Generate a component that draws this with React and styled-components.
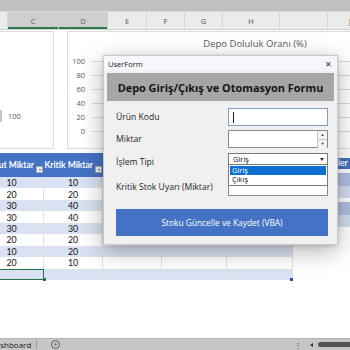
import React from "react";
import styled, { createGlobalStyle } from "styled-components";

const GlobalStyle = createGlobalStyle`
  html, body { margin: 0; padding: 0; background: #fff; }
  body { font-family: "Open Sans", "Liberation Sans", sans-serif; }
`;

const columns = [
  { label: "", w: 7 },
  { label: "C", w: 50, active: true },
  { label: "D", w: 48, active: true },
  { label: "E", w: 38 },
  { label: "F", w: 37 },
  { label: "G", w: 37 },
  { label: "H", w: 56 },
  { label: "", w: 47 },
  { label: "J", w: 44 },
];

const rows = [
  [10, 10], [20, 20], [30, 40], [30, 40], [30, 30], [20, 20], [10, 20], [20, 10],
];

const axis = [100, 80, 60, 40, 20, 0];

export default function App() {
  return (
    <Window>
      <GlobalStyle />
      <TopStrip />
      <ColumnHeaders>
        {columns.map((c, i) => (
          <ColHead key={i} w={c.w} active={c.active}>{c.label}</ColHead>
        ))}
      </ColumnHeaders>

      <Sheet>
        <ChartRow>
          <SmallChart>
            <BarStub />
            <SmallLabel>100</SmallLabel>
          </SmallChart>
          <BigChart>
            <ChartTitle>Depo Doluluk Oranı (%)</ChartTitle>
            <Plot>
              <Axis>
                {axis.map((a) => <AxisTick key={a}>{a}</AxisTick>)}
              </Axis>
              <Grid>
                {axis.map((a) => <GridLine key={a} />)}
              </Grid>
            </Plot>
          </BigChart>
        </ChartRow>

        <TableArea>
          <Table>
            <HeadRow>
              <HeadCell w={64}><HeadText>Mevcut Miktar</HeadText><Filter /></HeadCell>
              <HeadCell w={59}><HeadText>Kritik Miktar</HeadText><Filter /></HeadCell>
              <HeadCell w={59} />
              <HeadCell w={65} />
              <HeadCell w={66} />
            </HeadRow>
            {rows.map((r, i) => (
              <BodyRow key={i} band={i % 2 === 0}>
                <Cell w={64}>{r[0]}</Cell>
                <Cell w={59}>{r[1]}</Cell>
                <Cell w={59} />
                <Cell w={65} />
                <Cell w={66} />
              </BodyRow>
            ))}
            <BodyRow band>
              <Cell w={64} selected />
              <Cell w={59} />
              <Cell w={59} />
              <Cell w={65} />
              <Cell w={66} last />
            </BodyRow>
          </Table>

          <TableTail>
            <TailHead>İşlemler</TailHead>
            {[0, 1, 2, 3].map((i) => <TailRow key={i} band={i % 2 === 0} />)}
          </TableTail>
        </TableArea>
      </Sheet>

      <TabBar>
        <SheetTab>Dashboard</SheetTab>
        <TabDivider />
        <AddSheet>+</AddSheet>
        <TabSpacer />
        <TabDots>⋮</TabDots>
        <ScrollArrow />
        <ScrollThumb />
      </TabBar>

      <Dialog>
        <TitleBar>
          <span>UserForm</span>
          <CloseX>✕</CloseX>
        </TitleBar>
        <DialogBody>
          <Heading>Depo Giriş/Çıkış ve Otomasyon Formu</Heading>
          <FieldRow h={18} mt={7}>
            <Label>Ürün Kodu</Label>
            <TextBox h={18} focused><Caret /></TextBox>
          </FieldRow>
          <FieldRow h={18} mt={4}>
            <Label>Miktar</Label>
            <TextBox h={18}>
              <Spin>
                <SpinBtn>▲</SpinBtn>
                <SpinBtn>▼</SpinBtn>
              </Spin>
            </TextBox>
          </FieldRow>
          <FieldRow h={18} mt={5}>
            <Label>İşlem Tipi</Label>
            <Combo>
              <ComboText>Giriş</ComboText>
              <ComboArrow />
              <DropList>
                <DropItem active>Giriş</DropItem>
                <DropItem>Çıkış</DropItem>
              </DropList>
            </Combo>
          </FieldRow>
          <FieldRow h={19} mt={6}>
            <Label>Kritik Stok Uyarı (Miktar)</Label>
            <TextBox h={19} />
          </FieldRow>
          <SaveButton>Stoku Güncelle ve Kaydet (VBA)</SaveButton>
        </DialogBody>
      </Dialog>
    </Window>
  );
}

const Window = styled.div`
  width: 350px;
  height: 350px;
  overflow: hidden;
  position: relative;
  display: flex;
  flex-direction: column;
  background: #fff;
`
const TopStrip = styled.div`
  height: 11px;
  flex-shrink: 0;
  background: #c1c1c1;
  border-bottom: 1px solid #d9d9d9;
`
const ColumnHeaders = styled.div`
  display: flex;
  height: 17px;
  flex-shrink: 0;
  background: #ebebeb;
  border-bottom: 1px solid #d0d0d0;
`
const ColHead = styled.div`
  width: ${p => p.w}px;
  flex-shrink: 0;
  display: flex;
  align-items: center;
  justify-content: center;
  font-size: 7.5px;
  color: ${p => p.active ? '#3d6e4f' : '#505050'};
  background: ${p => p.active ? '#cfcfcf' : 'transparent'};
  border-right: 1px solid ${p => p.active ? '#cfcfcf' : '#d6d6d6'};
  box-shadow: ${p => p.active ? 'inset 0 -2px 0 #2e7d4f' : 'none'};
`
const Sheet = styled.div`
  flex: 1;
  display: flex;
  flex-direction: column;
  overflow: hidden;
`
const ChartRow = styled.div`
  display: flex;
  gap: 13px;
  margin-top: 1px;
  height: 118px;
  flex-shrink: 0;
`
const SmallChart = styled.div`
  width: 56px;
  margin-left: -2px;
  border: 1px solid #dcdcdc;
  display: flex;
  align-items: flex-end;
  padding-bottom: 26px;
  box-sizing: border-box;
  flex-shrink: 0;
`
const BarStub = styled.div`
  width: 3px;
  height: 12px;
  background: #c4c4c4;
`
const SmallLabel = styled.span`
  margin-left: 6px;
  font-size: 7.5px;
  color: #595959;
  line-height: 12px;
`
const BigChart = styled.div`
  width: 376px;
  flex-shrink: 0;
  border: 1px solid #dcdcdc;
  box-sizing: border-box;
  display: flex;
  flex-direction: column;
`
const ChartTitle = styled.div`
  text-align: center;
  font-size: 9.5px;
  color: #595959;
  line-height: 12px;
  padding-top: 6px;
`
const Plot = styled.div`
  display: flex;
  margin-top: 4px;
`
const Axis = styled.div`
  width: 17px;
  display: flex;
  flex-direction: column;
`
const AxisTick = styled.div`
  height: 14px;
  line-height: 14px;
  text-align: right;
  font-size: 7.5px;
  color: #595959;
`
const Grid = styled.div`
  flex: 1;
  margin-left: 7px;
  display: flex;
  flex-direction: column;
`
const GridLine = styled.div`
  height: 14px;
  background: linear-gradient(#d9d9d9, #d9d9d9) center / 100% 1px no-repeat;
`
const TableArea = styled.div`
  display: flex;
  align-items: flex-start;
  gap: 45px;
  margin-top: 4px;
  margin-left: -20px;
`
const Table = styled.div`
  display: flex;
  flex-direction: column;
  flex-shrink: 0;
`
const HeadRow = styled.div`
  display: flex;
  height: 24px;
  background: #4472c4;
`
const HeadCell = styled.div`
  width: ${p => p.w}px;
  display: flex;
  align-items: center;
  justify-content: flex-end;
  gap: 2px;
  padding-right: 1px;
  box-sizing: border-box;
  overflow: hidden;
`
const HeadText = styled.span`
  color: #fff;
  font-family: "Lato", "Open Sans", sans-serif;
  font-weight: 700;
  font-size: 8.5px;
  white-space: nowrap;
`
const Filter = styled.span`
  width: 7px;
  height: 7px;
  margin-top: 9px;
  flex-shrink: 0;
  background: #f0f0f0;
  border: 1px solid #a8a8a8;
  box-sizing: border-box;
  position: relative;
  &::after {
    content: "";
    position: absolute;
    left: 1.5px;
    top: 2px;
    border-left: 1.5px solid transparent;
    border-right: 1.5px solid transparent;
    border-top: 2px solid #555;
  }
`
const BodyRow = styled.div`
  display: flex;
  height: 11.45px;
  background: ${p => p.band ? '#d9e1f2' : '#fff'};
`
const Cell = styled.div`
  width: ${p => p.w}px;
  box-sizing: border-box;
  border-right: 1px solid #e2e2e2;
  display: flex;
  align-items: center;
  justify-content: center;
  font-family: "Lato", "Open Sans", sans-serif;
  font-size: 8.8px;
  color: #111;
  position: relative;
  ${p => p.selected && `
    border: 1.5px solid #217346;
    &::after {
      content: "";
      position: absolute;
      right: -2.5px;
      bottom: -2.5px;
      width: 3px;
      height: 3px;
      background: #217346;
    }
  `}
  ${p => p.last && `
    &::after {
      content: "";
      position: absolute;
      right: -1px;
      bottom: -1px;
      width: 3px;
      height: 3px;
      background: #2f4f9a;
    }
  `}
`
const TableTail = styled.div`
  width: 40px;
  margin-top: 5px;
  flex-shrink: 0;
  display: flex;
  flex-direction: column;
`
const TailHead = styled.div`
  height: 11px;
  background: #4472c4;
  color: #fff;
  font-family: "Lato", "Open Sans", sans-serif;
  font-weight: 700;
  font-size: 8.5px;
  line-height: 11px;
  white-space: nowrap;
  overflow: hidden;
  text-indent: -20px;
`
const TailRow = styled.div`
  height: 12.5px;
  margin-top: ${p => p.band ? '4px' : '0'};
  background: ${p => p.band ? '#aebfe0' : '#d3dcee'};
`
const TabBar = styled.div`
  height: 11px;
  flex-shrink: 0;
  display: flex;
  align-items: center;
  background: #c6c6c6;
  border-top: 1px solid #b3b3b3;
`
const SheetTab = styled.span`
  font-size: 8px;
  color: #222;
  margin-left: -10px;
  width: 46px;
  white-space: nowrap;
`
const TabDivider = styled.span`
  width: 1px;
  height: 9px;
  background: #9a9a9a;
`
const AddSheet = styled.span`
  margin-left: 14px;
  width: 7px;
  height: 7px;
  border: 1px solid #666;
  border-radius: 50%;
  font-size: 7px;
  line-height: 7px;
  text-align: center;
  color: #555;
`
const TabSpacer = styled.span`
  flex: 1;
`
const TabDots = styled.span`
  font-size: 8px;
  color: #444;
  margin-right: 8px;
`
const ScrollArrow = styled.span`
  width: 0;
  height: 0;
  border-top: 2px solid transparent;
  border-bottom: 2px solid transparent;
  border-right: 3px solid #333;
  margin-right: 5px;
`
const ScrollThumb = styled.span`
  width: 36px;
  height: 5px;
  margin-right: -4px;
  background: #545454;
  border-radius: 3px;
`
const Dialog = styled.div`
  position: absolute;
  left: 103px;
  top: 55px;
  width: 235px;
  background: #f0f0f0;
  border: 1px solid #c9c9c9;
  box-sizing: border-box;
  box-shadow: 0 6px 22px rgba(0, 0, 0, 0.3), 0 1px 4px rgba(0, 0, 0, 0.15);
`
const TitleBar = styled.div`
  height: 15px;
  display: flex;
  align-items: center;
  justify-content: space-between;
  padding: 0 5px 0 4px;
  background: #f5f7fb;
  font-size: 7.5px;
  color: #222;
`
const CloseX = styled.span`
  font-size: 8px;
  color: #333;
`
const DialogBody = styled.div`
  padding: 2px 9px 8px 12px;
`
const Heading = styled.div`
  height: 28px;
  margin: 0 -6px 0 -9px;
  background: #a6a6a6;
  display: flex;
  align-items: center;
  justify-content: center;
  font-weight: 700;
  font-size: 10.9px;
  color: #141414;
  white-space: nowrap;
`
const FieldRow = styled.div`
  display: flex;
  align-items: center;
  justify-content: space-between;
  height: ${p => p.h}px;
  margin-top: ${p => p.mt}px;
`
const Label = styled.span`
  font-size: 8.6px;
  color: #1e1e1e;
  white-space: nowrap;
`
const TextBox = styled.div`
  width: 100px;
  height: ${p => p.h}px;
  box-sizing: border-box;
  background: #fff;
  border: 1px solid ${p => p.focused ? '#7f9cc4' : '#8a8a8a'};
  display: flex;
  align-items: center;
  justify-content: flex-end;
  position: relative;
`
const Caret = styled.span`
  position: absolute;
  left: 4px;
  width: 1px;
  height: 11px;
  background: #222;
`
const Spin = styled.div`
  width: 9px;
  height: 100%;
  display: flex;
  flex-direction: column;
  border-left: 1px solid #c4c4c4;
`
const SpinBtn = styled.span`
  flex: 1;
  font-size: 4px;
  line-height: 8px;
  text-align: center;
  color: #333;
  background: #f3f3f3;
  & + & { border-top: 1px solid #c4c4c4; }
`
const Combo = styled.div`
  align-self: flex-start;
  width: 100px;
  height: 12px;
  box-sizing: border-box;
  background: #fff;
  border: 1px solid #7a7a7a;
  display: flex;
  align-items: center;
  justify-content: space-between;
  position: relative;
`
const ComboText = styled.span`
  font-size: 7.5px;
  margin-left: 4px;
  color: #111;
`
const ComboArrow = styled.span`
  width: 0;
  height: 0;
  margin-right: 3px;
  border-left: 2.5px solid transparent;
  border-right: 2.5px solid transparent;
  border-top: 3px solid #333;
`
const DropList = styled.div`
  position: absolute;
  left: -1px;
  top: 10px;
  width: 100px;
  box-sizing: border-box;
  background: #fff;
  border: 1px solid #7a7a7a;
  padding: 1px;
  z-index: 2;
`
const DropItem = styled.div`
  height: 9px;
  line-height: 9px;
  font-size: 7.5px;
  padding-left: 2px;
  color: ${p => p.active ? '#fff' : '#111'};
  background: ${p => p.active ? '#0a6fd0' : 'transparent'};
`
const SaveButton = styled.div`
  margin-top: 13px;
  height: 27px;
  background: #4472c4;
  display: flex;
  align-items: center;
  justify-content: center;
  color: #fff;
  font-size: 8.4px;
`
